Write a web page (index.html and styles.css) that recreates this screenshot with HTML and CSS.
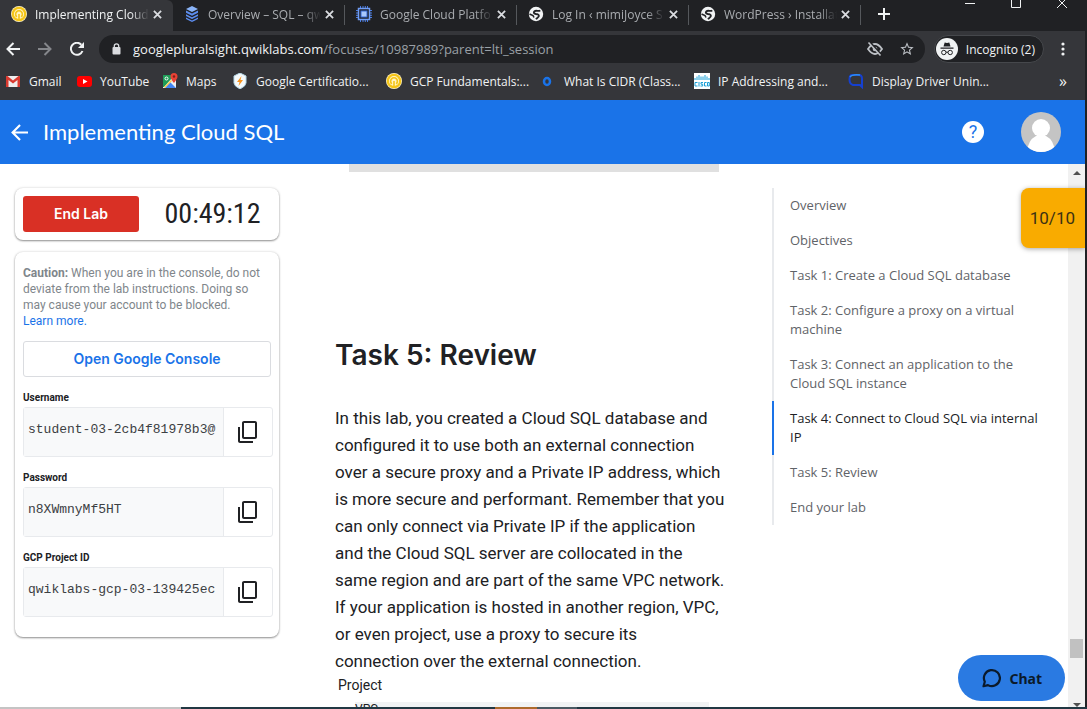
FILE: index.html
```html
<!DOCTYPE html>
<html lang="en">
<head>
<meta charset="utf-8">
<meta name="viewport" content="width=device-width, initial-scale=1">
<title>Implementing Cloud SQL</title>
<link rel="stylesheet" href="styles.css">
</head>
<body>
<svg class="defs" aria-hidden="true">
  <symbol id="close" viewBox="0 0 10 10"><path d="M1 1l8 8M9 1L1 9" stroke="currentColor" stroke-width="2"/></symbol>
  <symbol id="qwik" viewBox="0 0 16 16"><circle cx="8" cy="8" r="8" fill="#fff4c4"/><circle cx="8" cy="8" r="6.2" fill="none" stroke="#f5c518" stroke-width="2.2"/><path d="M5.8 10.8A3.4 3.4 0 1 1 10.200 10.800M8 8v7" fill="none" stroke="#f5c518" stroke-width="1.600"/></symbol>
  <symbol id="globe" viewBox="0 0 16 16"><circle cx="8" cy="8" r="7.200" fill="#f1f3f4"/><path d="M12.200 4.300C10.500 6 8.500 3.800 6.500 5.200c-1.500 1.300-.5 2.600 1.500 2.800 2.800.2 3.500 1.400 2.500 2.800-.8 1-1.600 1-2.500 2.500" fill="none" stroke="#202124" stroke-width="1.800"/><path d="M1.500 8l3.500 1.500 1 2" fill="none" stroke="#202124" stroke-width="1.600"/></symbol>
  <symbol id="copy" viewBox="0 0 24 24"><path fill="currentColor" d="M20 1H9C7.900 1 7 1.900 7 3v14c0 1.100.9 2 2 2h11c1.100 0 2-.9 2-2V3c0-1.100-.9-2-2-2zm0 16H9V3h11zM5 7H3v14c0 1.100.9 2 2 2h13v-2H5z"/></symbol>
</svg>
<div class="screen">
<div class="window">
  <header class="browser">
    <div class="tabs">
      <div class="tab tab-active"><svg class="fav"><use href="#qwik"/></svg><span class="tab-title">Implementing Cloud</span><button class="tab-close" aria-label="Close tab"><svg><use href="#close"/></svg></button></div>
      <div class="tab"><svg class="fav" viewBox="0 0 16 16"><path d="M8 0l6 3-6 3-6-3z" fill="#8ab4f8"/><path d="M2 4.500l6 3 6-3v2.200l-6 3-6-3zM2 8.200l6 3 6-3v1.800l-6 3-6-3zM2 11.500l6 3 6-3V13l-6 3-6-3z" fill="#5c8df0"/></svg><span class="tab-title">Overview – SQL – qw</span><button class="tab-close" aria-label="Close tab"><svg><use href="#close"/></svg></button></div>
      <div class="tab"><svg class="fav" viewBox="0 0 16 16"><path d="M4.500 0v16M7 0v16M9.300 0v16M11.500 0v16M0 4.500h16M0 7h16M0 9.300h16M0 11.500h16" stroke="#4a7de0"/><rect x="2.500" y="2.500" width="11" height="11" fill="#202124" stroke="#6f9df5" stroke-width="1.500"/><rect x="5" y="5" width="6" height="6" fill="#a9c7fa" stroke="#3367d6"/></svg><span class="tab-title">Google Cloud Platfo</span><button class="tab-close" aria-label="Close tab"><svg><use href="#close"/></svg></button></div>
      <div class="tab"><svg class="fav"><use href="#globe"/></svg><span class="tab-title">Log In ‹ mimiJoyce S</span><button class="tab-close" aria-label="Close tab"><svg><use href="#close"/></svg></button></div>
      <div class="tab"><svg class="fav"><use href="#globe"/></svg><span class="tab-title">WordPress › Installat</span><button class="tab-close" aria-label="Close tab"><svg><use href="#close"/></svg></button></div>
      <button class="new-tab" aria-label="New tab"><svg viewBox="0 0 12 12"><path d="M6 0v12M0 6h12" stroke="currentColor" stroke-width="2"/></svg></button>
      <div class="window-buttons">
        <button aria-label="Minimize"><svg viewBox="0 0 10 10"><path d="M0 3.500h10" stroke="currentColor"/></svg></button>
        <button aria-label="Maximize"><svg viewBox="0 0 10 10"><path d="M.5 -1.500h9v9h-9z" fill="none" stroke="currentColor"/></svg></button>
        <button aria-label="Close"><svg viewBox="0 0 10 10"><path d="M0 -2l10 10M10 -2L0 8" stroke="currentColor"/></svg></button>
      </div>
    </div>
    <div class="toolbar">
      <button class="tool" aria-label="Back"><svg viewBox="0 0 14 14"><path d="M14 7H1.500M7.500 1l-6 6 6 6" fill="none" stroke="currentColor" stroke-width="2"/></svg></button>
      <button class="tool tool-off" aria-label="Forward"><svg viewBox="0 0 14 14"><path d="M0 7h12.500M6.500 1l6 6-6 6" fill="none" stroke="currentColor" stroke-width="2"/></svg></button>
      <button class="tool" aria-label="Reload"><svg viewBox="0 0 14 14"><path d="M12.500 9A6 6 0 1 1 11.300 2.700" fill="none" stroke="currentColor" stroke-width="2"/><path d="M14 0v6H8z" fill="currentColor"/></svg></button>
      <div class="omnibox">
        <svg class="lock" viewBox="0 0 10 12"><rect x="1" y="4" width="8" height="7.500" rx="1" fill="currentColor"/><path d="M2.800 5V3a2.200 2.200 0 0 1 4.400 0v2" fill="none" stroke="currentColor" stroke-width="1.300"/></svg>
        <span class="url">googlepluralsight.qwiklabs.com<span class="path">/focuses/10987989?parent=lti_session</span></span>
        <svg class="omni-icon" viewBox="0 0 16 14"><path d="M1 7q7-10 14 0-7 10-14 0z" fill="none" stroke="currentColor" stroke-width="1.800"/><circle cx="8" cy="7" r="2.300" fill="currentColor"/><path d="M3 .5l12 13" stroke="#202124" stroke-width="2"/><path d="M1.500.5l12 13" stroke="currentColor" stroke-width="1.600"/></svg>
        <svg class="omni-icon" viewBox="0 0 24 24"><path fill="currentColor" d="M22 9.200l-7.200-.6L12 2 9.200 8.600 2 9.200l5.500 4.800L5.800 21 12 17.300 18.200 21l-1.600-7zM12 15.400l-3.800 2.300 1-4.300-3.300-2.900 4.400-.4L12 6.100l1.700 4 4.400.4-3.300 2.900 1 4.300z"/></svg>
      </div>
      <div class="incognito">
        <svg viewBox="0 0 22 22"><circle cx="11" cy="11" r="11" fill="#f1f3f4"/><path d="M7.500 8.500l1.200-4 2.300.6 2.300-.6 1.200 4zM4.500 9.500h13v1.300h-13z" fill="#202124"/><circle cx="7.800" cy="14.500" r="2.200" fill="none" stroke="#202124"/><circle cx="14.200" cy="14.500" r="2.200" fill="none" stroke="#202124"/><path d="M10 14.200h2" stroke="#202124"/></svg>
        <span>Incognito (2)</span>
      </div>
      <button class="menu" aria-label="Menu"><svg viewBox="0 0 4 14"><circle cx="2" cy="2" r="1.600" fill="currentColor"/><circle cx="2" cy="7" r="1.600" fill="currentColor"/><circle cx="2" cy="12" r="1.600" fill="currentColor"/></svg></button>
    </div>
    <nav class="bookmarks" aria-label="Bookmarks">
      <a href="#"><svg viewBox="0 0 16 16"><path d="M1 3h14v11H1z" fill="#eee"/><path d="M1 14V3h1.500L8 7.500 13.500 3H15v11h-2.500V7L8 10.500 3.500 7v7z" fill="#d93a30"/></svg>Gmail</a>
      <a href="#"><svg viewBox="0 0 16 16"><rect x="1" y="3" width="15" height="11" rx="3" fill="#f00"/><path d="M7 6l4.500 2.500L7 11z" fill="#fff"/></svg>YouTube</a>
      <a href="#"><svg viewBox="0 0 16 16"><rect x="1" y="2" width="13" height="13" fill="#eceff1"/><path d="M1 2h9v3L2 14H1z" fill="#1e9d57"/><path d="M3 15l5-6 6 6z" fill="#4285f4"/><path d="M2 14l7-7 1 1-7 7z" fill="#ffd04b"/><circle cx="4.500" cy="5.500" r="1.500" fill="none" stroke="#fff"/><path d="M12 10C9 6 8.500 5 8.500 3.500a3.500 3.500 0 0 1 7 0C15.500 5 15 6 12 10z" fill="#e94235"/><circle cx="12" cy="3.500" r="1.200" fill="#7b211c"/></svg>Maps</a>
      <a href="#"><svg viewBox="0 0 16 16"><path d="M8 0l6 3v7l-1.500 3L8 16l-4.500-3L2 10V3z" fill="#f5fafc" stroke="#b6d8e8"/><path d="M9.500 3L5 9h2.500L6.500 13 11 7H8.500z" fill="#f79420"/></svg>Google Certificatio...</a>
      <a href="#"><svg><use href="#qwik"/></svg>GCP Fundamentals:...</a>
      <a href="#"><svg viewBox="0 0 16 16"><ellipse cx="7" cy="8.500" rx="3" ry="3.500" fill="none" stroke="#1a73e8" stroke-width="2.500"/></svg>What Is CIDR (Class...</a>
      <a href="#"><svg viewBox="0 0 16 16"><path d="M0 0h16v16H0z" fill="#fff"/><path d="M1 5v2M3 3.500V7M5 2v5M7 3.500V7M9 3.500V7M11 2v5M13 3.500V7M15 5v2" stroke="#1ba0d7"/><path d="M3.500 9.500H1v3.500h2.500M5 9v4.500M9 9.500H7v1.700h1.700V13H6.500M12.500 9.500h-2V13h2M13.500 9.500h1.800V13h-1.800z" fill="none" stroke="#1ba0d7"/></svg>IP Addressing and...</a>
      <a href="#"><svg viewBox="0 0 16 16"><path d="M4 2h7q3 0 3 4v8l-2-2H5Q1.500 11 1.500 6.500 1.500 2 4 2z" fill="none" stroke="#1540d0" stroke-width="2"/><path d="M2 4q2-3 10-2" stroke="#2f8df0" stroke-width="1.500" fill="none"/></svg>Display Driver Unin...</a>
      <button class="more" aria-label="More bookmarks">»</button>
    </nav>
  </header>

  <header class="lab-bar">
    <button class="lab-back" aria-label="Back"><svg viewBox="0 0 16 16"><path d="M16 8H1.500M8.500 1l-7 7 7 7" fill="none" stroke="currentColor" stroke-width="2"/></svg></button>
    <h1>Implementing Cloud SQL</h1>
    <button class="help" aria-label="Help">?</button>
    <svg class="avatar" viewBox="0 0 40 40"><defs><clipPath id="round"><circle cx="20" cy="20" r="20"/></clipPath></defs><g clip-path="url(#round)"><path d="M0 0h40v40H0z" fill="#c4c4c4"/><circle cx="20" cy="16" r="9" fill="#fff"/><path d="M6 40q1-12 9-16h10q8 4 9 16z" fill="#fff"/></g></svg>
  </header>

  <div class="viewport">
    <aside class="sidebar">
      <section class="card timer-card">
        <button class="end-lab">End Lab</button>
        <div class="timer">00:49:12</div>
      </section>
      <section class="card details">
        <p class="caution"><strong>Caution:</strong> When you are in the console, do not deviate from the lab instructions. Doing so may cause your account to be blocked. <a href="#">Learn more.</a></p>
        <button class="console">Open Google Console</button>
        <label class="label" for="user">Username</label>
        <div class="field"><input id="user" readonly value="student-03-2cb4f81978b3@"><button aria-label="Copy username"><svg><use href="#copy"/></svg></button></div>
        <label class="label" for="pass">Password</label>
        <div class="field"><input id="pass" readonly value="n8XWmnyMf5HT"><button aria-label="Copy password"><svg><use href="#copy"/></svg></button></div>
        <label class="label" for="project">GCP Project ID</label>
        <div class="field"><input id="project" readonly value="qwiklabs-gcp-03-139425ec"><button aria-label="Copy project ID"><svg><use href="#copy"/></svg></button></div>
      </section>
    </aside>
    <main class="article">
      <div class="figure-end"></div>
      <h2>Task 5: Review</h2>
      <p>In this lab, you created a Cloud SQL database and configured it to use both an external connection over a secure proxy and a Private IP address, which is more secure and performant. Remember that you can only connect via Private IP if the application and the Cloud SQL server are collocated in the same region and are part of the same VPC network. If your application is hosted in another region, VPC, or even project, use a proxy to secure its connection over the external connection.</p>
      <div class="diagram"><div class="diagram-title">Project</div><div class="diagram-box">VPC</div></div>
    </main>
    <div class="toc-column">
      <nav class="toc" aria-label="Lab sections">
        <a href="#">Overview</a>
        <a href="#">Objectives</a>
        <a href="#">Task 1: Create a Cloud SQL database</a>
        <a href="#">Task 2: Configure a proxy on a virtual machine</a>
        <a href="#">Task 3: Connect an application to the Cloud SQL instance</a>
        <a href="#" class="current">Task 4: Connect to Cloud SQL via internal IP</a>
        <a href="#">Task 5: Review</a>
        <a href="#">End your lab</a>
      </nav>
    </div>
    <div class="scrollbar">
      <svg viewBox="0 0 8 4"><path d="M0 4l4-4 4 4z" fill="#505050"/></svg>
      <div class="thumb"></div>
      <svg viewBox="0 0 8 4"><path d="M0 0l4 4 4-4z" fill="#505050"/></svg>
    </div>
    <div class="score">10/10</div>
    <button class="chat"><svg viewBox="0 0 20 20"><path d="M2.500 18.200l1.300-4.400a8 8 0 1 1 3.200 3.300z" fill="none" stroke="currentColor" stroke-width="2.200" stroke-linejoin="round"/></svg>Chat</button>
  </div>
</div>
<div class="taskbar"></div>
</div>
</body>
</html>
```
FILE: styles.css
```css
* { box-sizing: border-box; }
body { margin: 0; font-family: Roboto, sans-serif; color: #202124; background: #202124; }
button { border: 0; padding: 0; margin: 0; background: none; color: inherit; font: inherit; }
a { text-decoration: none; color: inherit; }
svg { display: block; flex: none; }
.defs { position: absolute; width: 0; height: 0; }

.screen { display: flex; flex-direction: column; height: 100vh; }
.window { flex: 1; min-height: 0; display: flex; flex-direction: column; margin-right: 2px; background: #fff; }
.taskbar { height: 2px; background: linear-gradient(90deg, #c4c4c4 181px, #213843 181px 495px, #ad6b2c 495px 537px, #4a5a63 537px 577px, #213843 577px); }

.browser { background: #35363a; color: #f1f3f4; font-family: "Open Sans", "Noto Sans", sans-serif; font-size: 12px; }
.tabs { display: flex; height: 31px; background: #202124; }
.tab { display: flex; align-items: center; flex: 0 1 172px; min-width: 0; height: 28px; padding: 0 11px; color: #a9acb0; }
.tab:not(.tab-active) { background: linear-gradient(#55585c, #55585c) right 0 top 5px / 1px 20px no-repeat; }
.tab-active { flex-basis: 173px; height: 31px; padding-bottom: 3px; background: #35363a; border-top-right-radius: 6px; color: #f1f3f4; }
.fav { width: 16px; height: 16px; margin-right: 8px; }
.tab-title { flex: 1; min-width: 0; overflow: hidden; white-space: nowrap; -webkit-mask-image: linear-gradient(90deg, #000 84%, transparent); mask-image: linear-gradient(90deg, #000 84%, transparent); }
.tab-close { margin-left: 4px; color: #dadce0; }
.tab-close svg { width: 9px; height: 9px; }
.new-tab { width: 46px; height: 28px; display: grid; place-items: center; }
.new-tab svg { width: 12px; height: 12px; }
.window-buttons { display: flex; margin-left: auto; }
.window-buttons button { width: 46px; height: 10px; display: grid; place-items: center; }
.window-buttons svg { width: 10px; height: 10px; overflow: visible; }

.toolbar { display: flex; align-items: center; height: 36px; padding: 0 20px 0 6px; }
.tool { width: 32px; display: flex; }
.tool svg { width: 14px; height: 14px; }
.tool-off { color: #85878b; }
.tool:nth-child(3) { width: 29px; }
.omnibox { flex: 1; min-width: 0; display: flex; align-items: center; gap: 16px; height: 28px; padding: 0 10px 0 12px; border-radius: 14px; background: #202124; font-size: 13px; }
.lock { width: 11px; height: 12px; color: #dadce0; }
.url { flex: 1; min-width: 0; margin-left: -5px; overflow: hidden; white-space: nowrap; }
.path { color: #9aa0a6; }
.omni-icon { width: 16px; height: 16px; color: #bdc1c6; }
.incognito { display: flex; align-items: center; gap: 8px; height: 28px; margin-left: 9px; padding: 0 8px 0 1px; border: 1px solid #46484c; border-radius: 14px; background: #202124; white-space: nowrap; }
.incognito svg { width: 22px; height: 22px; }
.menu { margin-left: 17px; }
.menu svg { width: 4px; height: 14px; }

.bookmarks { display: grid; grid-template-columns: 71px 86px 70px 154px 154px 154px 154px 1fr auto; align-items: center; height: 33px; padding: 0 18px 5px 5px; white-space: nowrap; }
.bookmarks a { display: flex; gap: 8px; align-items: center; }
.bookmarks svg { width: 16px; height: 16px; }
.more { font-size: 16px; }

.lab-bar { display: flex; align-items: center; height: 64px; padding: 0 24px 0 11px; background: #1a73e8; color: #fff; }
.lab-back svg { width: 17px; height: 17px; }
.lab-bar h1 { margin: 0 auto 0 15px; font: 400 22px/28px Lato, sans-serif; }
.help { width: 22px; height: 22px; border-radius: 50%; background: #fff; color: #1a73e8; font: 400 18px/22px Roboto, sans-serif; }
.avatar { width: 40px; height: 40px; margin-left: 37px; }

.viewport { position: relative; flex: 1; min-height: 0; display: flex; overflow: hidden; }
.sidebar { flex: none; width: 335px; padding: 24px 56px 24px 15px; }
.card { border-radius: 8px; background: #fff; box-shadow: 0 1px 2px rgba(0, 0, 0, .4), 0 0 3px rgba(0, 0, 0, .14); }
.timer-card { display: flex; align-items: center; padding: 8px; margin-bottom: 12px; }
.end-lab { width: 116px; height: 36px; border-radius: 3px; background: #d93025; color: #fff; font: 600 14px/34px Inter, sans-serif; }
.timer { flex: 1; padding-left: 15px; text-align: center; font: 28px/36px "Roboto Condensed", "Liberation Sans Narrow", Roboto, sans-serif; }
.details { padding: 12px 6px 20px 8px; }
.caution { margin: 0 0 12px; padding-top: 1px; color: #80868b; font-size: 12px; line-height: 16px; }
.caution a { display: block; color: #1a73e8; }
.console { display: block; width: 248px; height: 36px; border: 1px solid #dadce0; border-radius: 3px; color: #1a73e8; font: 600 14px/34px Inter, sans-serif; }
.label { display: block; padding: 14px 0 3px; font-size: 10px; font-weight: 700; line-height: 13px; }
.field { display: flex; height: 50px; border: 1px solid #e8eaed; border-radius: 3px; }
.field input { flex: 1; min-width: 0; margin: 0; padding: 0 3px 6px 4px; border: 0; border-right: 1px solid #e8eaed; outline: 0; background: #f8f9fa; color: #3c4043; font: 13px "Liberation Mono", monospace; }
.field button { width: 48px; padding-right: 2px; display: grid; place-items: center; }
.field button svg { width: 24px; height: 24px; }

.article { flex: 1; min-width: 0; }
.figure-end { height: 8px; margin: 0 8px 0 14px; max-width: 370px; background: #e0e0e0; }
.article h2 { margin: 166px 0 0; font: 600 28px/34px Inter, sans-serif; }
.article p { max-width: 390px; margin: 33px 0 0; font-size: 17px; line-height: 27px; }
.diagram { padding: 0 18px 0 3px; font-size: 14px; }
.diagram-title { line-height: 20px; margin-bottom: 7px; }
.diagram-box { margin-left: 17px; height: 60px; background: #f1f3f4; font-size: 12px; line-height: 14px; }

.toc-column { flex: none; width: 341px; padding: 24px 0 0 45px; }
.toc { width: 280px; border-left: 2px solid #e8eaed; }
.toc a { display: block; margin-left: -2px; padding: 8px 8px 8px 16px; border-left: 2px solid transparent; color: #5f6368; font: 500 13px/19px "Open Sans", sans-serif; }
.toc .current { border-left-color: #1a73e8; color: #202124; }

.scrollbar { flex: none; width: 17px; display: flex; flex-direction: column; align-items: center; padding: 7px 0 0; background: #f1f1f1; }
.scrollbar svg { width: 8px; height: 4px; }
.thumb { width: 13px; height: 19px; margin: auto 0 45px; background: #c1c1c1; }
.score { position: absolute; top: 24px; right: 0; padding: 0 10px 0 9px; border-radius: 8px 0 0 8px; background: #f9ab00; color: #3c3214; font-size: 17px; line-height: 60px; box-shadow: 0 1px 5px rgba(0, 0, 0, .35); }
.chat { position: absolute; right: 20px; bottom: 6px; display: flex; align-items: center; gap: 8px; height: 46px; padding: 0 23px; border-radius: 23px; background: #2a7ae2; color: #0b1a2b; font: 700 14px "Noto Sans", sans-serif; }
.chat svg { width: 20px; height: 20px; }
```
